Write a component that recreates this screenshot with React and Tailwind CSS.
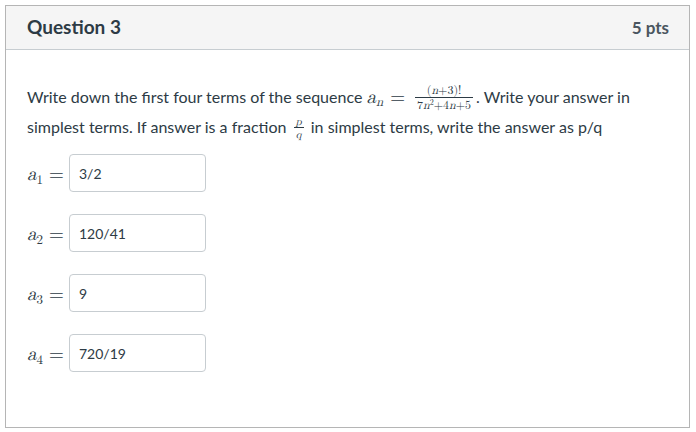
const text = 'text-[#2d3b45]';
const serif = "font-['Latin_Modern_Math','Liberation_Serif',serif]";

function Sub({ base, sub }) {
  return (
    <span className={`${serif} italic whitespace-nowrap`}>
      <span className="text-[19px]">{base}</span>
      <span className="text-[13px] not-italic relative top-[4px]">{sub}</span>
    </span>
  );
}

function Frac({ num, den, size = 'text-[12px]', h = 'h-[28px]', row = 'h-[13px] leading-[13px]' }) {
  return (
    <span className={`inline-flex flex-col items-center align-middle ${h} mx-[3px] ${serif} ${size} relative -top-[1px]`}>
      <span className={`px-[2px] ${row}`}>{num}</span>
      <span className={`border-t border-[#2d3b45] px-[2px] pt-[1px] ${row}`}>{den}</span>
    </span>
  );
}

const answers = [
  { sub: '1', value: '3/2' },
  { sub: '2', value: '120/41' },
  { sub: '3', value: '9' },
  { sub: '4', value: '720/19' },
];

export default function App() {
  return (
    <div className={`p-[5px] font-['Lato','Noto_Sans',sans-serif] ${text}`}>
      <div className="w-[685px] h-[423px] border border-[#b5b5b5] bg-white">
        <div className="h-[44px] bg-[#f5f5f5] border-b border-[#c7cdd1] flex items-center justify-between pl-[21px] pr-[20px]">
          <h2 className="text-[19px] font-bold">Question 3</h2>
          <span className="text-[17px] font-bold text-[#4a5560]">5 pts</span>
        </div>

        <div className="pt-[32px] pl-[21px] text-[16px]">
          <div className="h-[30px] leading-[30px] whitespace-nowrap">
            Write down the first four terms of the sequence{' '}
            <span className={`${serif} italic text-[19px]`}>a</span>
            <span className={`${serif} italic text-[13px] relative top-[3px]`}>n</span>
            <span className={`${serif} text-[19px] mx-[7px]`}>=</span>
            <Frac
              num={<>(<span className="italic">n</span>+3)!</>}
              den={
                <>
                  7<span className="italic">n</span>
                  <span className="text-[8px] relative -top-[4px]">2</span>+4<span className="italic">n</span>+5
                </>
              }
            />
            . Write your answer in
          </div>
          <div className="h-[30px] leading-[30px] whitespace-nowrap">
            simplest terms. If answer is a fraction{' '}
            <Frac
              num={<span className="italic">p</span>}
              den={<span className="italic">q</span>}
              size="text-[11px]"
              h="h-[24px]"
              row="h-[11px] leading-[11px]"
            />{' '}
            in simplest terms, write the answer as p/q
          </div>

          <div className="mt-[12px] flex flex-col gap-[22px]">
            {answers.map((a) => (
              <div key={a.sub} className="flex items-center">
                <div className="w-[42px] flex items-center pt-[4px]">
                  <Sub base="a" sub={a.sub} />
                  <span className={`${serif} text-[19px] ml-[6px]`}>=</span>
                </div>
                <input
                  readOnly
                  value={a.value}
                  className="w-[137px] h-[38px] border border-[#c7cdd1] rounded-[4px] pl-[9px] text-[14px] text-[#2d3b45] outline-none"
                />
              </div>
            ))}
          </div>
        </div>
      </div>
    </div>
  );
}
